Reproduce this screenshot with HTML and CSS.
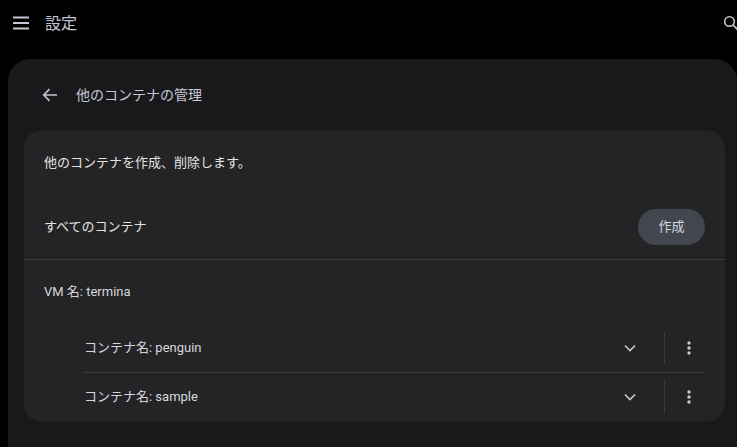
FILE: index.html
```html
<!DOCTYPE html>
<html lang="ja">
<head>
    <meta charset="UTF-8">
    <meta name="viewport" content="width=device-width, initial-scale=1.0">
    <title>設定</title>
    <link rel="stylesheet" href="styles.css">
</head>
<body>

    <header class="top-bar">
        <svg class="menu-icon" width="18" height="14" viewBox="0 0 18 14"><path d="M1 1.5h16M1 7h16M1 12.5h16" stroke="#c7cad6" stroke-width="2"/></svg>
        <h1 class="top-title">設定</h1>
        <svg class="search-icon" width="16" height="16" viewBox="0 0 16 16"><circle cx="6.5" cy="6.5" r="4.8" fill="none" stroke="#c7c7c7" stroke-width="1.6"/><path d="M10 10l5 5" stroke="#c7c7c7" stroke-width="1.6"/></svg>
    </header>

    <main class="panel">
        <div class="sub-header">
            <svg class="back-icon" width="16" height="14" viewBox="0 0 16 14"><path d="M15 7H2M7.5 1.2L1.8 7l5.7 5.8" fill="none" stroke="#c1c5d6" stroke-width="1.7"/></svg>
            <h2 class="sub-title">他のコンテナの管理</h2>
        </div>

        <section class="card">
            <p class="card-desc">他のコンテナを作成、削除します。</p>
            <div class="all-row">
                <span>すべてのコンテナ</span>
                <button class="create-btn">作成</button>
            </div>
            <div class="vm-name">VM 名: termina</div>
            <div class="container-list">
                <div class="container-row">
                    <span class="container-name">コンテナ名: penguin</span>
                    <svg class="chevron" width="12" height="8" viewBox="0 0 12 8"><path d="M1 1.5l5 5 5-5" fill="none" stroke="#c9c9cf" stroke-width="1.6"/></svg>
                    <span class="row-sep"></span>
                    <svg class="dots" width="4" height="14" viewBox="0 0 4 14"><circle cx="2" cy="2" r="1.7"/><circle cx="2" cy="7" r="1.7"/><circle cx="2" cy="12" r="1.7"/></svg>
                </div>
                <div class="container-row">
                    <span class="container-name">コンテナ名: sample</span>
                    <svg class="chevron" width="12" height="8" viewBox="0 0 12 8"><path d="M1 1.5l5 5 5-5" fill="none" stroke="#c9c9cf" stroke-width="1.6"/></svg>
                    <span class="row-sep"></span>
                    <svg class="dots" width="4" height="14" viewBox="0 0 4 14"><circle cx="2" cy="2" r="1.7"/><circle cx="2" cy="7" r="1.7"/><circle cx="2" cy="12" r="1.7"/></svg>
                </div>
            </div>
        </section>
    </main>

</body>
</html>
```

FILE: styles.css
```css
html, body {
    height: 100%;
}
body {
    font-family: Roboto, "Noto Sans CJK JP", sans-serif;
    font-size: 13px;
    background-color: #000;
    color: #e3e3e3;
    margin: 0;
    overflow: hidden;
}
h1, h2, p {
    margin: 0;
    font-weight: 400;
}
.top-bar {
    height: 59px;
    display: flex;
    align-items: center;
    padding-bottom: 13px;
    padding-left: 12px;
    box-sizing: border-box;
}
.top-title {
    font-size: 16px;
    color: #c4c7d5;
    margin-left: 15px;
    margin-bottom: 3px;
}
.search-icon {
    margin-left: auto;
    margin-right: -2px;
}
.panel {
    margin-left: 8px;
    height: 388px;
    background-color: #19191b;
    border-radius: 22px 22px 0 0;
    padding: 0 12px 0 16px;
}
.sub-header {
    height: 72px;
    display: flex;
    align-items: center;
    padding-left: 18px;
}
.sub-title {
    font-size: 14px;
    color: #c4c7d5;
    margin-left: 18px;
    margin-bottom: 2px;
}
.card {
    background-color: #242426;
    border-radius: 16px;
    height: 290px;
    box-sizing: border-box;
}
.card-desc {
    padding: 22px 20px 0;
    line-height: 19px;
}
.all-row {
    height: 65px;
    box-sizing: border-box;
    margin-top: 23px;
    padding: 14px 20px 0;
    display: flex;
    align-items: flex-start;
    justify-content: space-between;
    line-height: 36px;
    border-bottom: 1px solid #3c3c3f;
}
.create-btn {
    width: 67px;
    height: 36px;
    border: none;
    border-radius: 18px;
    background-color: #42464f;
    color: #d3d6e4;
    font: inherit;
    padding: 0;
}
.vm-name {
    padding: 23px 20px 0;
    line-height: 17px;
    color: #d5d7dc;
}
.container-list {
    margin: 24px 20px 0 60px;
}
.container-row {
    height: 48px;
    box-sizing: border-box;
    display: flex;
    align-items: center;
    color: #d5d7dc;
}
.container-row + .container-row {
    height: 49px;
    border-top: 1px solid #3c3c3f;
}
.container-name {
    flex: 1;
    margin-bottom: 4px;
}
.row-sep {
    width: 1px;
    height: 32px;
    background-color: #3c3c3f;
    margin-left: 28px;
}
.dots {
    fill: #c9c9d2;
    margin-left: 22px;
    margin-right: 14px;
}
```
